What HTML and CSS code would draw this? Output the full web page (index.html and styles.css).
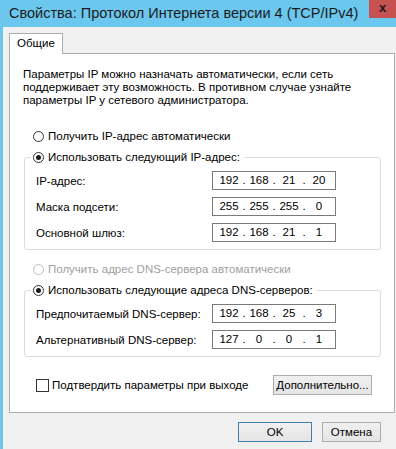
FILE: index.html
```html
<!DOCTYPE html>
<html lang="ru">
<head>
    <meta charset="UTF-8">
    <title>Свойства: Протокол Интернета версии 4 (TCP/IPv4)</title>
    <link rel="stylesheet" href="styles.css">
</head>
<body>
    <div class="window">
        <!-- Title bar -->
        <div class="titlebar">
            <span class="title">Свойства: Протокол Интернета версии 4 (TCP/IPv4)</span>
            <span class="close">x</span>
        </div>

        <!-- Tabs -->
        <div class="tabs">
            <span class="tab">Общие</span>
        </div>

        <div class="panel">
            <p class="desc">Параметры IP можно назначать автоматически, если сеть поддерживает эту возможность. В противном случае узнайте параметры IP у сетевого администратора.</p>

            <div class="option"><span class="radio"></span>Получить IP-адрес автоматически</div>

            <fieldset class="group">
                <legend class="option"><span class="radio checked"></span>Использовать следующий IP-адрес:</legend>
                <div class="row">
                    <span class="label">IP-адрес:</span>
                    <span class="ip"><span>192</span><i>.</i><span>168</span><i>.</i><span>21</span><i>.</i><span>20</span></span>
                </div>
                <div class="row">
                    <span class="label">Маска подсети:</span>
                    <span class="ip"><span>255</span><i>.</i><span>255</span><i>.</i><span>255</span><i>.</i><span>0</span></span>
                </div>
                <div class="row">
                    <span class="label">Основной шлюз:</span>
                    <span class="ip"><span>192</span><i>.</i><span>168</span><i>.</i><span>21</span><i>.</i><span>1</span></span>
                </div>
            </fieldset>

            <div class="option disabled"><span class="radio"></span>Получить адрес DNS-сервера автоматически</div>

            <fieldset class="group">
                <legend class="option"><span class="radio checked"></span>Использовать следующие адреса DNS-серверов:</legend>
                <div class="row">
                    <span class="label">Предпочитаемый DNS-сервер:</span>
                    <span class="ip"><span>192</span><i>.</i><span>168</span><i>.</i><span>25</span><i>.</i><span>3</span></span>
                </div>
                <div class="row">
                    <span class="label">Альтернативный DNS-сервер:</span>
                    <span class="ip"><span>127</span><i>.</i><span>0</span><i>.</i><span>0</span><i>.</i><span>1</span></span>
                </div>
            </fieldset>

            <div class="bottom">
                <label class="check"><span class="box"></span>Подтвердить параметры при выходе</label>
                <button class="btn advanced">Дополнительно...</button>
            </div>
        </div>

        <!-- Dialog buttons -->
        <div class="footer">
            <button class="btn ok">OK</button>
            <button class="btn cancel">Отмена</button>
        </div>
    </div>
</body>
</html>
```

FILE: styles.css
```css
body {
    margin: 0;
    background-color: #f0f0f0;
    font-family: "Segoe UI", "Liberation Sans", Arial, sans-serif;
    font-size: 11.5px;
    color: #000;
    overflow: hidden;
}
.window {
    height: 449px;
    border-left: 3px solid #6cc7ee;
    box-sizing: border-box;
}
.titlebar {
    height: 27px;
    background-color: #6cc7ee;
    display: flex;
    justify-content: space-between;
    align-items: flex-start;
}
.title {
    padding-left: 6px;
    font-size: 14.5px;
    line-height: 26px;
    color: #1b1b1b;
    white-space: nowrap;
}
.close {
    flex-shrink: 0;
    width: 27px;
    height: 18px;
    background-color: #c75050;
    color: #1a1a1a;
    font-weight: bold;
    font-size: 13px;
    line-height: 15px;
    text-align: center;
}
.tabs {
    padding: 6px 0 0 6px;
    height: 20px;
}
.tab {
    display: inline-block;
    height: 21px;
    padding: 0 7px;
    line-height: 19px;
    background-color: #fff;
    border: 1px solid #adadad;
    border-bottom: none;
    box-sizing: border-box;
    position: relative;
    z-index: 1;
}
.panel {
    margin-left: 6px;
    width: 386px;
    height: 360px;
    box-sizing: border-box;
    background-color: #fff;
    border: 1px solid #adadad;
    padding: 14px 13px 0 13px;
}
.desc {
    margin: 0;
    line-height: 13px;
}
.option {
    display: flex;
    align-items: center;
    height: 14px;
    line-height: 14px;
}
.panel > .option {
    margin: 22px 0 0 10px;
}
.panel > .option.disabled {
    margin-top: 12px;
    color: #a0a0a0;
}
.radio {
    width: 11px;
    height: 11px;
    border: 1px solid #333;
    border-radius: 50%;
    box-sizing: border-box;
    margin-right: 4px;
    display: flex;
    align-items: center;
    justify-content: center;
    background-color: #fff;
}
.disabled .radio {
    border-color: #bcbcbc;
}
.radio.checked::after {
    content: "";
    width: 5px;
    height: 5px;
    border-radius: 50%;
    background-color: #1a1a1a;
}
.group {
    margin: 7px 0 0 1px;
    padding: 0 6px 7px 6px;
    border: 1px solid #dcdcdc;
    border-radius: 3px;
}
.group legend {
    padding: 0 4px 0 2px;
}
.row {
    display: flex;
    align-items: center;
    justify-content: space-between;
    margin-top: 7px;
    padding-left: 5px;
    width: 300px;
}
.group legend + .row {
    margin-top: 7px;
}
.label {
    white-space: nowrap;
}
.ip {
    display: flex;
    flex-shrink: 0;
    width: 124px;
    height: 19px;
    box-sizing: border-box;
    border: 1px solid #7a7a7a;
    padding-left: 5px;
    line-height: 17px;
}
.ip span {
    width: 22px;
    text-align: center;
}
.ip i {
    font-style: normal;
    width: 8px;
    text-align: center;
}
.bottom {
    display: flex;
    align-items: center;
    justify-content: space-between;
    margin: 18px 9px 0 13px;
}
.check {
    display: flex;
    align-items: center;
}
.box {
    width: 13px;
    height: 13px;
    box-sizing: border-box;
    border: 1px solid #333;
    margin-right: 3px;
}
.btn {
    font-family: inherit;
    font-size: 11.5px;
    height: 20px;
    padding: 0;
    background: linear-gradient(#f0f0f0, #e5e5e5);
    border: 1px solid #acacac;
    color: #000;
}
.advanced {
    width: 99px;
}
.footer {
    display: flex;
    justify-content: flex-end;
    gap: 10px;
    margin-top: 9px;
    padding-right: 15px;
}
.ok {
    width: 74px;
    border-color: #3c7fb1;
}
.cancel {
    width: 59px;
}
```
